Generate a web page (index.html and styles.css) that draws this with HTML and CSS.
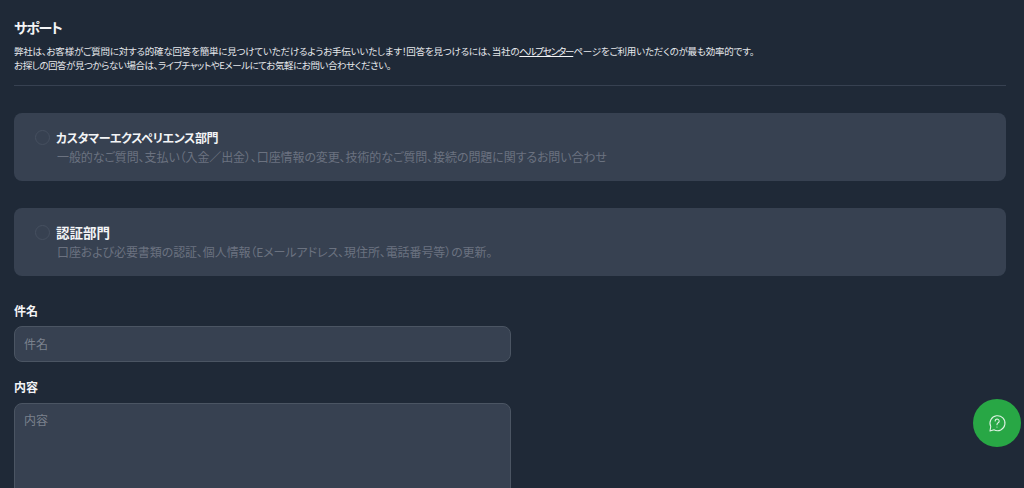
FILE: index.html
```html
<!DOCTYPE html>
<html lang="ja">
<head>
<meta charset="utf-8">
<title>サポート</title>
<link rel="stylesheet" href="styles.css">
</head>
<body>
<main class="page">
  <h1 class="title">サポート</h1>
  <p class="intro"><span class="intro-line">弊社は、お客様がご質問に対する的確な回答を簡単に見つけていただけるようお手伝いいたします！回答を見つけるには、当社の<a class="link" href="#">ヘルプセンター</a>ページをご利用いただくのが最も効率的です。</span><span class="intro-line intro-line-tight">お探しの回答が見つからない場合は、ライブチャットやEメールにてお気軽にお問い合わせください。</span></p>
  <hr class="rule">
  <div class="options">
    <label class="option">
      <span class="radio"></span>
      <span class="option-text">
        <span class="option-title">カスタマーエクスペリエンス部門</span>
        <span class="option-desc">一般的なご質問、支払い（入金／出金）、口座情報の変更、技術的なご質問、接続の問題に関するお問い合わせ</span>
      </span>
    </label>
    <label class="option">
      <span class="radio"></span>
      <span class="option-text">
        <span class="option-title option-title-kanji">認証部門</span>
        <span class="option-desc">口座および必要書類の認証、個人情報（Eメールアドレス、現住所、電話番号等）の更新。</span>
      </span>
    </label>
  </div>
  <div class="field field-subject">
    <label class="field-label" for="subject">件名</label>
    <input class="input" id="subject" type="text" placeholder="件名">
  </div>
  <div class="field field-body">
    <label class="field-label" for="body">内容</label>
    <textarea class="input textarea" id="body" placeholder="内容"></textarea>
  </div>
</main>
<button class="help" type="button" aria-label="ヘルプ">
  <svg class="help-icon" viewBox="0 0 24 24" fill="none" stroke="currentColor" stroke-width="1.3" stroke-linecap="round" stroke-linejoin="round">
    <path d="M3.6 21.6l.9-5.4A9 9 0 1 1 8.4 20.2z"/>
    <path d="M9.8 9.6a2.4 2.4 0 1 1 3.6 2.2c-.9.5-1.4 1-1.4 1.9v.3"/>
    <path d="M12 16.8v.1"/>
  </svg>
</button>
</body>
</html>
```

FILE: styles.css
```css
* { box-sizing: border-box; }
html, body { height: 100%; }
body {
  margin: 0;
  height: 488px;
  overflow: hidden;
  background: #1f2937;
  color: #f3f4f6;
  font-family: "Noto Sans CJK JP", "Noto Sans", sans-serif;
  font-feature-settings: "palt";
}
.page {
  padding: 17px 18px 0 14px;
}
.title {
  margin: 0;
  font-size: 14px;
  line-height: 20px;
  font-weight: 700;
  letter-spacing: -1.2px;
  color: #f3f4f6;
}
.intro {
  margin: 7px 0 0;
  font-size: 9.5px;
  line-height: 14px;
  color: #e5e7eb;
}
.intro-line {
  display: block;
  letter-spacing: -0.2px;
}
.intro-line-tight {
  letter-spacing: -0.45px;
}
.link {
  color: #f3f4f6;
  letter-spacing: -1.2px;
  text-decoration: underline;
}
.rule {
  margin: 13px 0 0;
  border: 0;
  border-top: 1px solid #374151;
}
.options {
  margin-top: 27px;
  display: flex;
  flex-direction: column;
  gap: 27px;
}
.option {
  display: flex;
  gap: 6px;
  height: 68px;
  padding: 15px 21px;
  background: #374151;
  border-radius: 8px;
}
.radio {
  flex: none;
  width: 15px;
  height: 15px;
  margin-top: 2px;
  border-radius: 50%;
  border: 1px solid #465060;
  background: #374151;
}
.option-text {
  display: flex;
  flex-direction: column;
}
.option-title {
  font-size: 12px;
  line-height: 20px;
  font-weight: 700;
  letter-spacing: -0.4px;
  color: #f3f4f6;
}
.option-title-kanji {
  font-size: 13.5px;
  line-height: 18px;
  margin-bottom: 2px;
  letter-spacing: 0;
}
.option-desc {
  margin-left: 1px;
  font-size: 12px;
  line-height: 18px;
  letter-spacing: -0.1px;
  color: #6b7280;
}
.field { display: flex; flex-direction: column; width: 497px; }
.field-subject { margin-top: 27px; }
.field-body { margin-top: 17px; }
.field-label {
  font-size: 12px;
  line-height: 16px;
  font-weight: 700;
  color: #f3f4f6;
  margin-bottom: 7px;
}
.input {
  display: block;
  width: 100%;
  height: 36px;
  padding: 0 9px 2px;
  background: #374151;
  border: 1px solid #4b5563;
  border-radius: 8px;
  color: #f3f4f6;
  font-family: inherit;
  font-feature-settings: inherit;
  font-size: 12px;
  outline: none;
}
.input::placeholder { color: #7b828e; opacity: 1; }
.textarea {
  height: 120px;
  margin-top: 1px;
  padding: 8px 9px;
  resize: none;
  line-height: 16px;
}
.help {
  position: fixed;
  left: 973px;
  top: 399px;
  width: 48px;
  height: 48px;
  padding: 0;
  border: 0;
  border-radius: 50%;
  background: #28a745;
  color: #ffffff;
  display: flex;
  align-items: center;
  justify-content: center;
}
.help-icon { width: 20px; height: 20px; opacity: .85; }
```
